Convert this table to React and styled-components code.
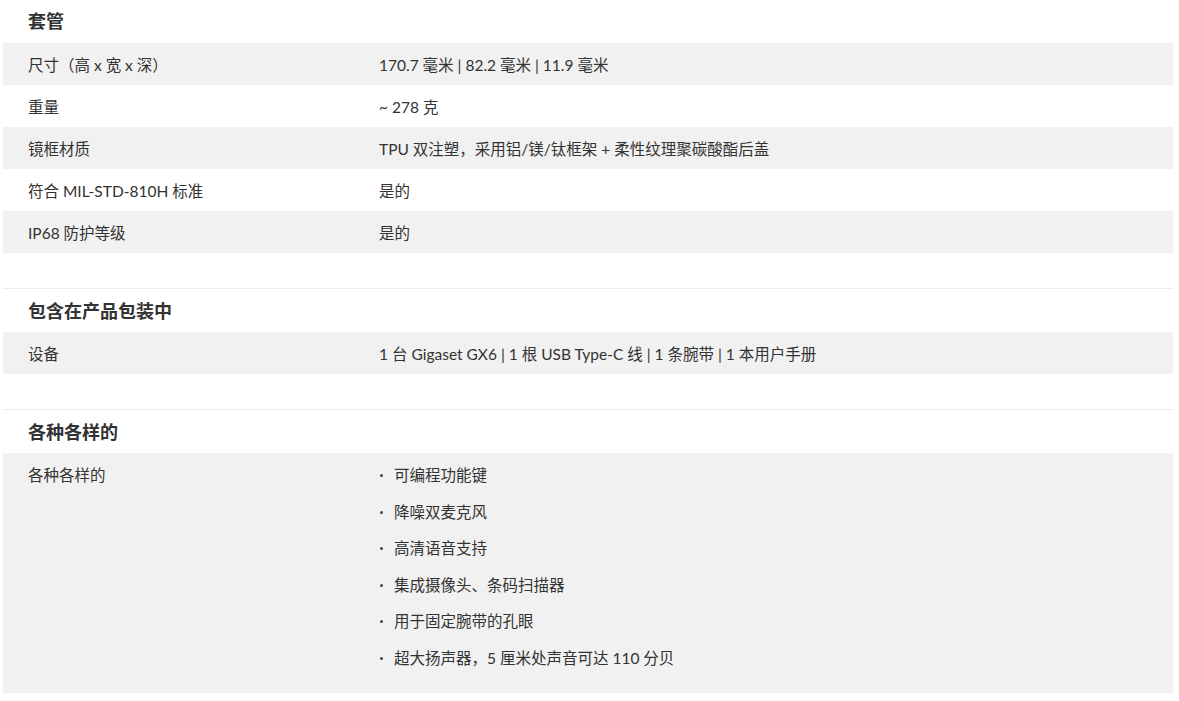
import React from "react";
import styled, { createGlobalStyle } from "styled-components";

const Global = createGlobalStyle`
  html, body { margin: 0; padding: 0; background: #fff; }
  body {
    font-family: Lato, "Noto Sans CJK SC", sans-serif;
    color: #333;
    font-size: 16px;
  }
  * { box-sizing: border-box; }
`;

const Page = styled.div`
  width: 1170px;
  margin-left: 3px;
  padding-bottom: 8px;
`;

const Section = styled.section`
  border-top: ${(p) => (p.$first ? "none" : "1px solid #ececec")};
  margin-top: ${(p) => (p.$first ? "0" : "35px")};
`;

const Heading = styled.h3`
  margin: 0;
  padding: ${(p) => (p.$first ? "9px 25px 10px" : "10px 25px 9px")};
  font-size: 18px;
  line-height: 24px;
  font-weight: 700;
  color: #333;
  font-family: Lato, "Noto Sans CJK SC", sans-serif;
`;

const Row = styled.div`
  display: grid;
  grid-template-columns: 30% 70%;
  background: ${(p) => (p.$shade ? "#f1f1f1" : "#fff")};
  padding: 10px 0 8px;
  font-size: 15.5px;
  line-height: 24px;
  color: #333;
`;

const Label = styled.div`
  padding: 0 25px;
  font-family: Lato, "Noto Sans CJK SC", sans-serif;
`;

const Value = styled.div`
  padding: 0 25px;
  font-family: Lato, "Noto Sans CJK SC", sans-serif;
`;

const List = styled.ul`
  list-style: none;
  margin: 0;
  padding: 0 0 2px;
`;

const Item = styled.li`
  position: relative;
  padding-left: 15px;
  margin-bottom: 12.6px;
  &::before {
    content: "";
    position: absolute;
    left: 1px;
    top: 11px;
    width: 3px;
    height: 3px;
    border-radius: 50%;
    background: #444;
  }
`;

const sections = [
  {
    title: "套管",
    rows: [
      ["尺寸（高 x 宽 x 深）", "170.7 毫米 | 82.2 毫米 | 11.9 毫米"],
      ["重量", "~ 278 克"],
      ["镜框材质", "TPU 双注塑，采用铝/镁/钛框架 + 柔性纹理聚碳酸酯后盖"],
      ["符合 MIL-STD-810H 标准", "是的"],
      ["IP68 防护等级", "是的"],
    ],
  },
  {
    title: "包含在产品包装中",
    rows: [["设备", "1 台 Gigaset GX6 | 1 根 USB Type-C 线 | 1 条腕带 | 1 本用户手册"]],
  },
  {
    title: "各种各样的",
    rows: [
      [
        "各种各样的",
        [
          "可编程功能键",
          "降噪双麦克风",
          "高清语音支持",
          "集成摄像头、条码扫描器",
          "用于固定腕带的孔眼",
          "超大扬声器，5 厘米处声音可达 110 分贝",
        ],
      ],
    ],
  },
];

export default function App() {
  return (
    <Page>
      <Global />
      {sections.map((s, si) => (
        <Section key={s.title} $first={si === 0}>
          <Heading $first={si === 0}>{s.title}</Heading>
          {s.rows.map(([label, value], ri) => (
            <Row key={ri} $shade={ri % 2 === 0}>
              <Label>{label}</Label>
              <Value>
                {Array.isArray(value) ? (
                  <List>
                    {value.map((v) => (
                      <Item key={v}>{v}</Item>
                    ))}
                  </List>
                ) : (
                  value
                )}
              </Value>
            </Row>
          ))}
        </Section>
      ))}
    </Page>
  );
}
